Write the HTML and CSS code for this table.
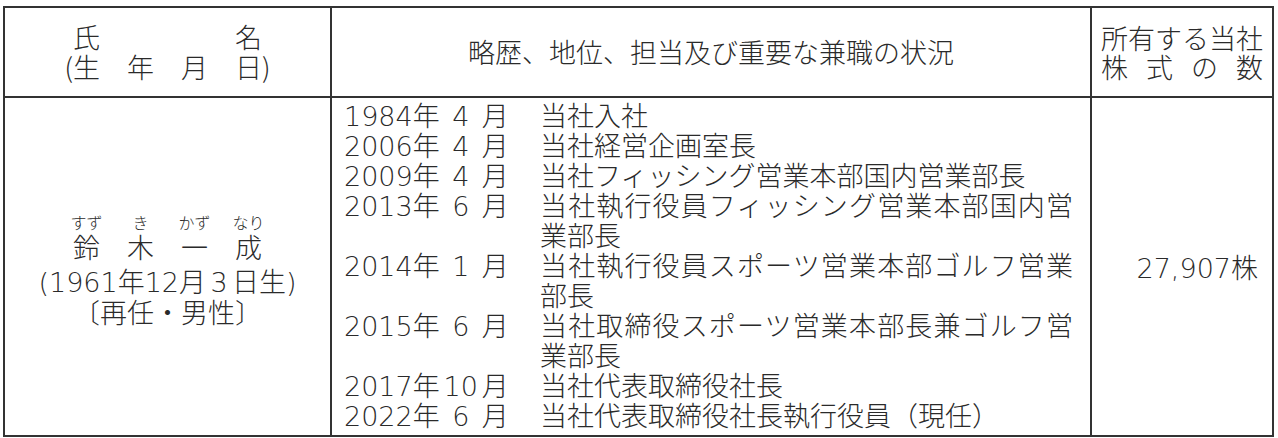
FILE: index.html
```html
<!DOCTYPE html>
<html lang="ja">
<head>
<meta charset="utf-8">
<title>候補者</title>
<link rel="stylesheet" href="styles.css">
</head>
<body>
<table class="officer">
  <colgroup>
    <col class="c-name">
    <col class="c-career">
    <col class="c-shares">
  </colgroup>
  <thead>
    <tr class="head">
      <th class="h-name">
        <div class="hl">氏　　　　　名</div>
        <div class="hl">(生　年　月　日)</div>
      </th>
      <th class="h-career">略歴、地位、担当及び重要な兼職の状況</th>
      <th class="h-shares">
        <div class="hl">所有する当社</div>
        <div class="hl spread"><span>株</span><span>式</span><span>の</span><span>数</span></div>
      </th>
    </tr>
  </thead>
  <tbody>
    <tr class="body">
      <td class="name">
        <div class="name-block">
          <div class="quad furi"><span>すず</span><span>き</span><span>かず</span><span>なり</span></div>
          <div class="quad kanji"><span>鈴</span><span>木</span><span>一</span><span>成</span></div>
          <div class="birth"><span class="num">(1961</span>年<span class="num">12</span>月<span class="num d">3</span>日生<span class="num">)</span></div>
          <div class="status">〔再任・男性〕</div>
        </div>
      </td>
      <td class="career">
        <div class="career-list">
          <div class="date"><span class="num">1984</span>年<span class="num m">4</span>月</div><div class="desc">当社入社</div>
          <div class="date"><span class="num">2006</span>年<span class="num m">4</span>月</div><div class="desc">当社経営企画室長</div>
          <div class="date"><span class="num">2009</span>年<span class="num m">4</span>月</div><div class="desc">当社フィッシング営業本部国内営業部長</div>
          <div class="date"><span class="num">2013</span>年<span class="num m">6</span>月</div><div class="desc">当社執行役員フィッシング営業本部国内営業部長</div>
          <div class="date"><span class="num">2014</span>年<span class="num m">1</span>月</div><div class="desc">当社執行役員スポーツ営業本部ゴルフ営業部長</div>
          <div class="date"><span class="num">2015</span>年<span class="num m">6</span>月</div><div class="desc">当社取締役スポーツ営業本部長兼ゴルフ営業部長</div>
          <div class="date"><span class="num">2017</span>年<span class="num m">10</span>月</div><div class="desc">当社代表取締役社長</div>
          <div class="date"><span class="num">2022</span>年<span class="num m">6</span>月</div><div class="desc">当社代表取締役社長執行役員（現任）</div>
        </div>
      </td>
      <td class="shares"><span class="num">27,907</span>株</td>
    </tr>
  </tbody>
</table>
</body>
</html>
```

FILE: styles.css
```css
html, body {
  margin: 0;
  padding: 0;
  background: #ffffff;
}

body {
  font-family: "Noto Sans CJK JP", "Noto Sans", sans-serif;
  font-weight: 300;
  font-size: 27px;
  color: #2a2a2a;
}

.num {
  font-family: "DejaVu Sans", "Noto Sans CJK JP", sans-serif;
  font-weight: 200;
  line-height: 20px;
}

.officer {
  border-collapse: collapse;
  table-layout: fixed;
  width: 1271px;
  margin: 6px 0 0 3px;
}

.officer th,
.officer td {
  border: 2px solid #333333;
  padding: 0;
  font-weight: 300;
  vertical-align: middle;
}

.c-name { width: 327px; }
.c-career { width: 760px; }
.c-shares { width: 182px; }

.head { height: 90px; }
.body { height: 339px; }

.hl {
  line-height: 30px;
  white-space: pre;
}

.h-name,
.h-career {
  text-align: center;
  line-height: 30px;
}

.h-shares {
  text-align: left;
  padding: 0 9px !important;
}

.h-shares .hl {
  line-height: 29px;
}

.spread {
  display: flex;
  justify-content: space-between;
  width: 162px;
}

/* name cell */
.name-block {
  display: flex;
  flex-direction: column;
  align-items: center;
  padding-top: 6px;
}

.quad {
  display: grid;
  grid-template-columns: repeat(4, 54px);
  justify-items: center;
}

.furi {
  font-size: 16px;
  line-height: 18px;
}

.kanji {
  line-height: 30px;
  margin-top: 1px;
}

.birth {
  line-height: 30px;
  margin-top: 4px;
}

.birth .d {
  display: inline-block;
  width: 26px;
  text-align: center;
}

.status {
  line-height: 30px;
  margin-top: 1px;
}

/* career cell */
.career {
  vertical-align: top !important;
  padding: 2px 17px 0 12px !important;
}

.career-list {
  display: grid;
  grid-template-columns: 196px 1fr;
  line-height: 30px;
}

.date {
  white-space: nowrap;
}

.date .m {
  display: inline-block;
  width: 42px;
  text-align: center;
}

.desc {
  text-align: justify;
}

/* shares cell */
.shares {
  text-align: right;
  padding-right: 14px !important;
}
```
